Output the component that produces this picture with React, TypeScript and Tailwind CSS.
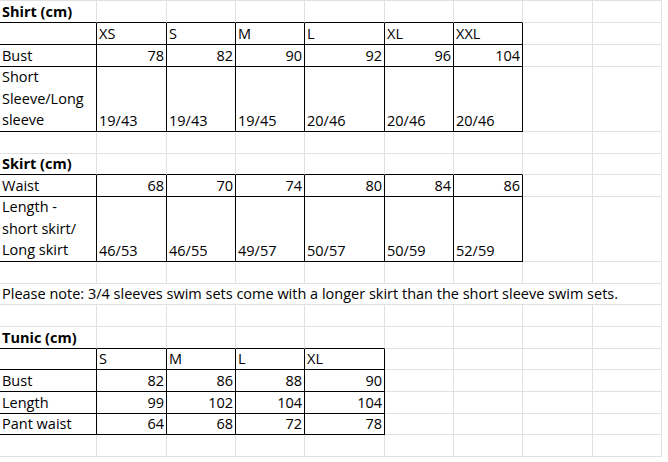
import React from "react";

type Cell = { t?: string; r?: boolean; b?: boolean; lines?: string[] };

const E: Cell = {};
const L = (t: string): Cell => ({ t });
const R = (t: string): Cell => ({ t, r: true });
const B = (t: string): Cell => ({ t, b: true });
const M = (...lines: string[]): Cell => ({ lines });

const empty9 = (): Cell[] => Array.from({ length: 9 }, () => E);
const fill = (cells: Cell[]): Cell[] => [...cells, ...Array.from({ length: 9 - cells.length }, () => E)];

const rows: (Cell[] | "note")[] = [
  fill([B("Shirt (cm)")]),
  fill([E, L("XS"), L("S"), L("M"), L("L"), L("XL"), L("XXL")]),
  fill([L("Bust"), R("78"), R("82"), R("90"), R("92"), R("96"), R("104")]),
  fill([M("Short", "Sleeve/Long", "sleeve"), L("19/43"), L("19/43"), L("19/45"), L("20/46"), L("20/46"), L("20/46")]),
  empty9(),
  fill([B("Skirt (cm)")]),
  fill([L("Waist"), R("68"), R("70"), R("74"), R("80"), R("84"), R("86")]),
  fill([M("Length -", "short skirt/", "Long skirt"), L("46/53"), L("46/55"), L("49/57"), L("50/57"), L("50/59"), L("52/59")]),
  empty9(),
  "note",
  empty9(),
  fill([B("Tunic (cm)")]),
  fill([E, L("S"), L("M"), L("L"), L("XL")]),
  fill([L("Bust"), R("82"), R("86"), R("88"), R("90")]),
  fill([L("Length"), R("99"), R("102"), R("104"), R("104")]),
  fill([L("Pant waist"), R("64"), R("68"), R("72"), R("78")]),
  empty9(),
];

function inTable(r: number, c: number): boolean {
  if (r >= 1 && r <= 3 && c >= 0 && c <= 6) return true;
  if (r >= 6 && r <= 7 && c >= 0 && c <= 6) return true;
  if (r >= 12 && r <= 15 && c >= 0 && c <= 4) return true;
  return false;
}

export default function App() {
  const cells: React.ReactNode[] = [];
  rows.forEach((row, r) => {
    if (row === "note") {
      cells.push(
        <div
          key={`n${r}`}
          className="col-span-9 border-r border-b border-r-[#e1e1e1] border-b-[#e1e1e1] flex items-end px-[2px] leading-[20px] whitespace-nowrap"
        >
          Please note: 3/4 sleeves swim sets come with a longer skirt than the short sleeve swim sets.
        </div>
      );
      return;
    }
    row.forEach((cell, c) => {
      const rBlack = inTable(r, c) || inTable(r, c + 1);
      const bBlack = inTable(r, c) || inTable(r + 1, c);
      const rb = rBlack ? "border-r-black" : "border-r-[#e1e1e1]";
      const bb = bBlack ? "border-b-black" : "border-b-[#e1e1e1]";
      const just = cell.r ? "justify-end" : "justify-start";
      const weight = cell.b ? "font-bold" : "font-normal";
      cells.push(
        <div
          key={`${r}-${c}`}
          className={`border-r border-b ${rb} ${bb} flex items-end ${just} px-[2px] whitespace-nowrap overflow-visible ${weight}`}
        >
          {cell.lines ? (
            <div className="flex flex-col leading-[21.67px]">
              {cell.lines.map((l, i) => (
                <span key={i}>{l}</span>
              ))}
            </div>
          ) : (
            <span className="leading-[20px]">{cell.t}</span>
          )}
        </div>
      );
    });
  });

  return (
    <div className="w-[668px] h-[462px] bg-white overflow-hidden text-black text-[14.5px] font-['Open_Sans',_sans-serif]">
      <div className="w-[662px] border-t border-t-[#e1e1e1] grid grid-cols-[97px_70px_69px_69px_80px_69px_69px_70px_69px] grid-rows-[22px_22px_22px_65px_22px_21px_22px_65px_22px_21px_22px_22px_21px_22px_22px_21px_22px]">
        {cells}
      </div>
    </div>
  );
}
